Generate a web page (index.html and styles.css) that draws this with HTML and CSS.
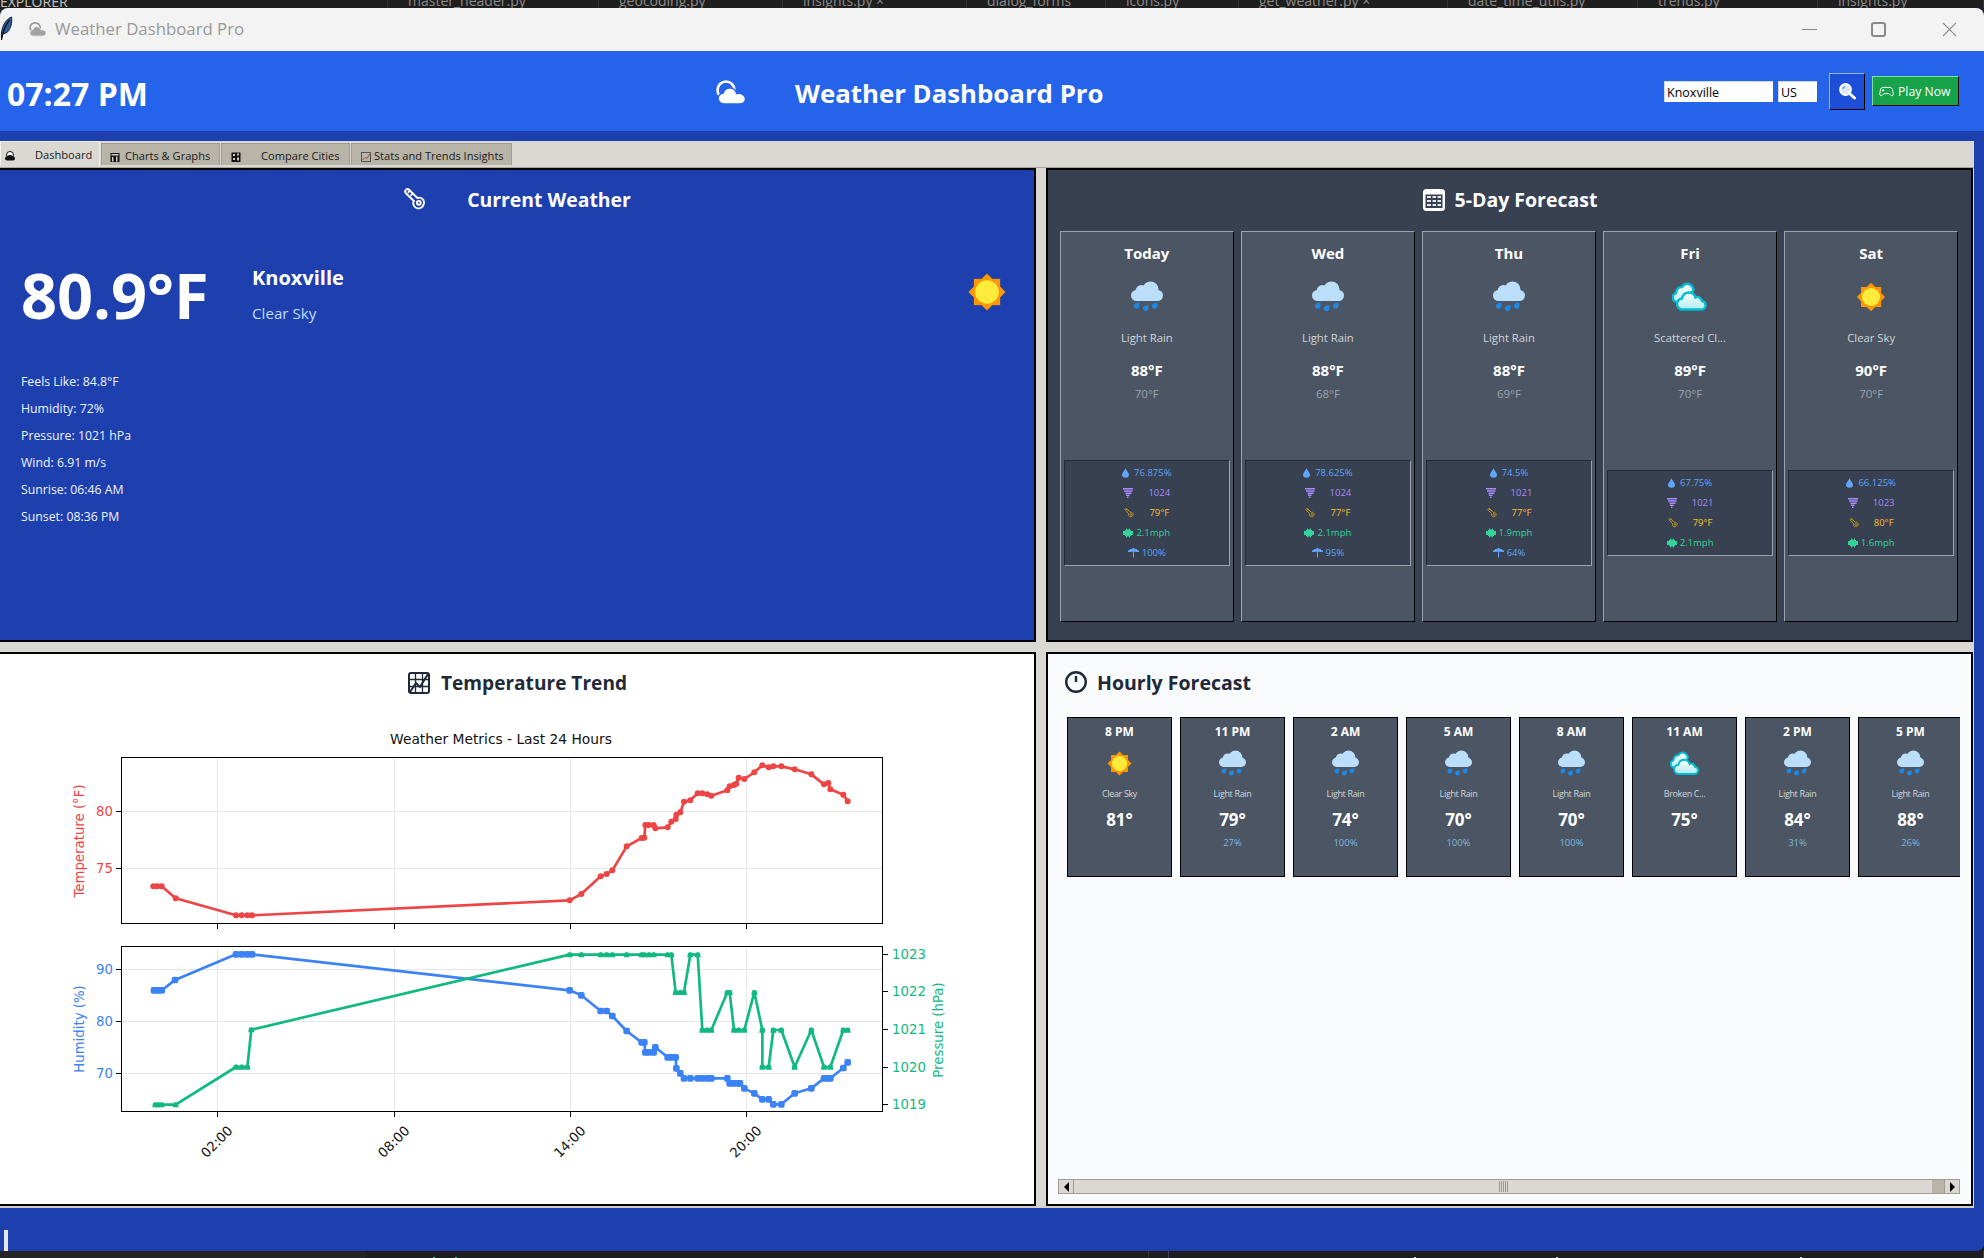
FILE: index.html
```html
<!DOCTYPE html>
<html lang="en">
<head>
<meta charset="utf-8">
<title>Weather Dashboard Pro</title>
<link rel="stylesheet" href="styles.css">
</head>
<body>
<svg class="defs" width="0" height="0" aria-hidden="true">
  <defs>
    <linearGradient id="cloud-grad" x1="0" y1="0" x2="0" y2="1">
      <stop offset="0" stop-color="#ffffff"/>
      <stop offset="1" stop-color="#b2ebf2"/>
    </linearGradient>
    <symbol id="rain" viewBox="0 0 32 32">
      <rect class="cloud-blue" x="0" y="9" width="32" height="11" rx="5.500"/>
      <circle class="cloud-blue" cx="19.500" cy="8.500" r="8"/>
      <circle class="cloud-blue" cx="10.500" cy="10" r="6"/>
      <path class="drop-blue" d="M8.500 21.500V25a2.800 2.800 0 1 1-4.800-2c1-.8 3-1.200 4.800-1.500z"/>
      <path class="drop-blue" d="M17.500 24v3.500a2.800 2.800 0 1 1-4.800-2c1-.8 3-1.200 4.800-1.500z"/>
      <path class="drop-blue" d="M26.500 21.500V25a2.800 2.800 0 1 1-4.800-2c1-.8 3-1.200 4.800-1.500z"/>
    </symbol>
    <symbol id="sun" viewBox="0 0 32 32">
      <rect class="sun-ray" x="6" y="6" width="20" height="20"/>
      <rect class="sun-ray" x="6" y="6" width="20" height="20" transform="rotate(45 16 16)"/>
      <circle class="sun-core" cx="16" cy="16" r="9"/>
    </symbol>
    <symbol id="clouds" viewBox="0 0 36 28">
      <path class="cloud-back" d="M5 19a4.500 4.500 0 0 1-1-8.800C4.500 6 7 3.800 10 4c1.500-2.500 4-3.600 6.500-3 3 .7 4.500 3 5 6l-8 14z"/>
      <path class="cloud-front" d="M11 26.500a5.500 5.500 0 0 1-1-11c.8-3.500 3.500-6 7-6 3 0 5.500 2 6.500 5 1-.6 3-.8 4.500.4 1.200 1 1.800 2 2 3.100 2.300.4 3.700 2 3.700 4.200 0 2.500-2 4.300-4.500 4.300z"/>
    </symbol>
    <symbol id="sky" viewBox="0 0 32 26">
      <circle class="sky-ring" cx="11" cy="11" r="8.500"/>
      <path class="sky-cloud" d="M9 25a5.500 5.500 0 0 1-.8-11c1-3.500 4-5.500 7.500-5 3 .4 5.300 2.500 6 5.500 .8-.3 1.800-.3 2.500-.2 3.500.2 6.300 2.700 6.300 5.500 0 3-2.500 5.200-6 5.200z"/>
    </symbol>
    <symbol id="thermo" viewBox="0 0 24 24">
      <path class="thermo-line" d="M3.200 1.800c1-1 2.200-.9 3.200.1L15 10.400c2.300-.7 5 .2 6.200 2.200 1.400 2.500.6 6-2 7.700-2.500 1.500-5.700 1-7.400-1.300-1.200-1.700-1.400-3.800-.5-5.400L2.800 5.200c-.9-1-.7-2.400.4-3.400z"/>
      <circle class="thermo-line" cx="16.500" cy="15.500" r="2"/>
      <path class="thermo-line" d="M5 5l3-3M8 8l3-3"/>
    </symbol>
    <symbol id="ic-drop" viewBox="0 0 8 11"><path d="M4 0C5 3 8 5 8 7.500A4 3.500 0 0 1 0 7.500C0 5 3 3 4 0z"/></symbol>
    <symbol id="ic-press" viewBox="0 0 10 10"><path d="M0 0h10v1.500H0zM1 2.200h8.500v1.500H1zM2.500 4.400h6v1.500h-6zM3 6.600h3.500v1.400H3zM4 8.500h1.500V10H4z"/></symbol>
    <symbol id="ic-wind" viewBox="0 0 10 10"><path d="M3 .5h1v1h2v-1h1v1.500h1v1h2v4H8v1H7v1.500H6v-1H4v1H3V8H2V7H0V3h2V2h1z"/></symbol>
    <symbol id="ic-rain" viewBox="0 0 11 10"><path d="M0 4V3l1-1h1V1h2l1-1h1l1 1h2v1h1l1 1v1H8l-1-.6-1 .6v5.500H5V4L4 3.400 3 4z"/></symbol>
    <marker id="m-temp" viewBox="-10 -10 20 20" markerWidth="20" markerHeight="20" markerUnits="userSpaceOnUse"><circle class="fill-temp" r="9"/></marker>
    <marker id="m-hum" viewBox="-12 -12 24 24" markerWidth="24" markerHeight="24" markerUnits="userSpaceOnUse"><rect class="fill-hum" x="-10" y="-10" width="20" height="20" rx="6"/></marker>
    <marker id="m-pres" viewBox="-10 -10 20 20" markerWidth="20" markerHeight="20" markerUnits="userSpaceOnUse"><path class="fill-pres" d="M-9 8L-7-5L0-8L7-5L9 8z"/></marker>
  </defs>
</svg>

<div class="editor-top">
  <span class="ed-tab ed-first">EXPLORER</span>
  <span class="ed-tab">master_header.py</span>
  <span class="ed-tab">geocoding.py</span>
  <span class="ed-tab">insights.py ×</span>
  <span class="ed-tab">dialog_forms</span>
  <span class="ed-tab">icons.py</span>
  <span class="ed-tab">get_weather.py ×</span>
  <span class="ed-tab">date_time_utils.py</span>
  <span class="ed-tab">trends.py</span>
  <span class="ed-tab">insights.py</span>
</div>

<div class="window">
  <div class="titlebar">
    <svg class="feather" viewBox="0 0 12 24"><path class="feather-fill" d="M1 22C0 13 4 4 11 1c1 6-1 12-4 15l-5 2.500z"/><path class="feather-line" d="M1 24C2 16 5 9 9 4"/></svg>
    <svg class="title-sky" viewBox="0 0 32 26"><circle class="tb-ring" cx="12" cy="11" r="8.500"/><path class="tb-cloud" d="M9 25a5.500 5.500 0 0 1-.8-11c1-3.500 4-5.500 7.500-5 3 .4 5.300 2.500 6 5.500 .8-.3 1.800-.3 2.500-.2 3.500.2 6.300 2.700 6.300 5.500 0 3-2.500 5.200-6 5.200z"/></svg>
    <span class="title-text">Weather Dashboard Pro</span>
    <div class="win-controls">
      <span class="win-min"></span>
      <span class="win-max"></span>
      <svg class="win-close" viewBox="0 0 16 16"><path class="win-x" d="M1 1l14 14M15 1L1 15"/></svg>
    </div>
  </div>

  <header class="app-header">
    <div class="clock">07:27 PM</div>
    <svg class="head-sky" viewBox="0 0 32 26"><use href="#sky"/></svg>
    <h1 class="app-title">Weather Dashboard Pro</h1>
    <div class="controls">
      <input class="entry entry-city" value="Knoxville" aria-label="City">
      <input class="entry entry-country" value="US" aria-label="Country">
      <button class="btn-search" aria-label="Search">
        <svg class="search-icon" viewBox="0 0 18 18"><circle class="search-glass" cx="7.500" cy="7.500" r="5.500"/><path class="search-handle" d="M11.500 11.500L16.500 16"/><path class="search-shine" d="M5 7a3 3 0 0 1 2-2.500"/></svg>
      </button>
      <button class="btn-play">
        <svg class="pad-icon" viewBox="0 0 20 16"><path class="pad-line" d="M5.500 2.500h9c2 0 3 1.200 3.500 3l1 5.500c.3 2-1.800 3.500-3.300 2L13.500 10.800h-7L4.300 13c-1.500 1.500-3.600 0-3.300-2l1-5.500c.5-1.800 1.500-3 3.500-3zM5.500 5v3M4 6.500h3M13 6h.1M15 8h.1"/></svg>
        Play Now
      </button>
    </div>
  </header>

  <div class="band"></div>

  <div class="notebook">
    <nav class="tabs">
      <div class="tab tab-active tab-dash">
        <svg class="tab-ic ic-dash" viewBox="0 0 10 10"><circle class="ti-ring" cx="5" cy="4" r="3.500"/><path class="ti-black" d="M2 9.500a2 2 0 0 1 0-4C3 3.500 7 3.500 8 5.500a2 2 0 0 1 0 4z"/></svg>
        <span>Dashboard</span>
      </div>
      <div class="tab tab-charts">
        <svg class="tab-ic" viewBox="0 0 10 10"><rect class="ti-black" x=".5" y="1" width="9" height="9"/><rect class="ti-white" x="1.500" y="2" width="7" height="1.500"/><rect class="ti-white" x="2" y="5" width="1.500" height="4.500"/><rect class="ti-white" x="6" y="4.500" width="1.500" height="5"/></svg>
        <span>Charts &amp; Graphs</span>
      </div>
      <div class="tab tab-compare">
        <svg class="tab-ic" viewBox="0 0 10 10"><rect class="ti-black" x=".5" y=".5" width="9" height="9.500"/><rect class="ti-white" x="2" y="2" width="2" height="2"/><rect class="ti-white" x="6" y="1.500" width="2" height="2"/><rect class="ti-white" x="2" y="6" width="2" height="2"/><rect class="ti-white" x="6" y="5.500" width="2" height="3"/></svg>
        <span>Compare Cities</span>
      </div>
      <div class="tab tab-stats">
        <svg class="tab-ic" viewBox="0 0 10 10"><rect class="ti-frame" x=".5" y=".5" width="9" height="9"/><path class="ti-trend" d="M1.500 8L4 5.500 6 6.500 9 1.500"/></svg>
        <span>Stats and Trends Insights</span>
      </div>
    </nav>

    <main class="panels">
      <section class="panel panel-current">
        <div class="panel-title panel-title-current">
          <svg class="title-thermo" viewBox="0 0 24 24"><use href="#thermo"/></svg>
          <h2>Current Weather</h2>
        </div>
        <div class="now">
          <div class="now-temp">80.9°F</div>
          <div class="now-place">
            <div class="now-city">Knoxville</div>
            <div class="now-sky">Clear Sky</div>
          </div>
          <svg class="now-sun"><use href="#sun"/></svg>
        </div>
        <ul class="now-stats">
          <li>Feels Like: 84.8°F</li>
          <li>Humidity: 72%</li>
          <li>Pressure: 1021 hPa</li>
          <li>Wind: 6.91 m/s</li>
          <li>Sunrise: 06:46 AM</li>
          <li>Sunset: 08:36 PM</li>
        </ul>
      </section>

      <section class="panel panel-forecast">
        <div class="panel-title panel-title-forecast">
          <svg class="title-cal" viewBox="0 0 24 24"><rect class="cal-frame" x="1" y="1" width="22" height="22" rx="3.500"/><rect class="cal-head" x="3.500" y="6.500" width="17" height="13.500"/><path class="cal-grid" d="M5 9h4M10.500 9h3.500M15.500 9h3.500M5 13h4M10.500 13h3.500M15.500 13h3.500M5 17h4M10.500 17h3.500M15.500 17h3.500"/></svg>
          <h2>5-Day Forecast</h2>
        </div>
        <div class="days">
          <article class="day">
            <div class="day-name">Today</div>
            <svg class="day-icon"><use href="#rain"/></svg>
            <div class="day-desc">Light Rain</div>
            <div class="day-high">88°F</div>
            <div class="day-low">70°F</div>
            <div class="day-slot"><div class="metrics">
              <div class="metric m-drop"><svg class="mi mi-drop"><use href="#ic-drop"/></svg>76.875%</div>
              <div class="metric m-press"><svg class="mi mi-press"><use href="#ic-press"/></svg>1024</div>
              <div class="metric m-feel"><svg class="mi mi-feel"><use href="#thermo"/></svg>79°F</div>
              <div class="metric m-wind"><svg class="mi mi-wind"><use href="#ic-wind"/></svg>2.1mph</div>
              <div class="metric m-rain"><svg class="mi mi-rain"><use href="#ic-rain"/></svg>100%</div>
            </div></div>
          </article>
          <article class="day">
            <div class="day-name">Wed</div>
            <svg class="day-icon"><use href="#rain"/></svg>
            <div class="day-desc">Light Rain</div>
            <div class="day-high">88°F</div>
            <div class="day-low">68°F</div>
            <div class="day-slot"><div class="metrics">
              <div class="metric m-drop"><svg class="mi mi-drop"><use href="#ic-drop"/></svg>78.625%</div>
              <div class="metric m-press"><svg class="mi mi-press"><use href="#ic-press"/></svg>1024</div>
              <div class="metric m-feel"><svg class="mi mi-feel"><use href="#thermo"/></svg>77°F</div>
              <div class="metric m-wind"><svg class="mi mi-wind"><use href="#ic-wind"/></svg>2.1mph</div>
              <div class="metric m-rain"><svg class="mi mi-rain"><use href="#ic-rain"/></svg>95%</div>
            </div></div>
          </article>
          <article class="day">
            <div class="day-name">Thu</div>
            <svg class="day-icon"><use href="#rain"/></svg>
            <div class="day-desc">Light Rain</div>
            <div class="day-high">88°F</div>
            <div class="day-low">69°F</div>
            <div class="day-slot"><div class="metrics">
              <div class="metric m-drop"><svg class="mi mi-drop"><use href="#ic-drop"/></svg>74.5%</div>
              <div class="metric m-press"><svg class="mi mi-press"><use href="#ic-press"/></svg>1021</div>
              <div class="metric m-feel"><svg class="mi mi-feel"><use href="#thermo"/></svg>77°F</div>
              <div class="metric m-wind"><svg class="mi mi-wind"><use href="#ic-wind"/></svg>1.9mph</div>
              <div class="metric m-rain"><svg class="mi mi-rain"><use href="#ic-rain"/></svg>64%</div>
            </div></div>
          </article>
          <article class="day">
            <div class="day-name">Fri</div>
            <svg class="day-icon day-clouds"><use href="#clouds"/></svg>
            <div class="day-desc">Scattered Cl...</div>
            <div class="day-high">89°F</div>
            <div class="day-low">70°F</div>
            <div class="day-slot"><div class="metrics">
              <div class="metric m-drop"><svg class="mi mi-drop"><use href="#ic-drop"/></svg>67.75%</div>
              <div class="metric m-press"><svg class="mi mi-press"><use href="#ic-press"/></svg>1021</div>
              <div class="metric m-feel"><svg class="mi mi-feel"><use href="#thermo"/></svg>79°F</div>
              <div class="metric m-wind"><svg class="mi mi-wind"><use href="#ic-wind"/></svg>2.1mph</div>
            </div></div>
          </article>
          <article class="day">
            <div class="day-name">Sat</div>
            <svg class="day-icon"><use href="#sun"/></svg>
            <div class="day-desc">Clear Sky</div>
            <div class="day-high">90°F</div>
            <div class="day-low">70°F</div>
            <div class="day-slot"><div class="metrics">
              <div class="metric m-drop"><svg class="mi mi-drop"><use href="#ic-drop"/></svg>66.125%</div>
              <div class="metric m-press"><svg class="mi mi-press"><use href="#ic-press"/></svg>1023</div>
              <div class="metric m-feel"><svg class="mi mi-feel"><use href="#thermo"/></svg>80°F</div>
              <div class="metric m-wind"><svg class="mi mi-wind"><use href="#ic-wind"/></svg>1.6mph</div>
            </div></div>
          </article>
        </div>
      </section>

      <section class="panel panel-trend">
        <div class="panel-title panel-title-trend">
          <svg class="title-chart" viewBox="0 0 24 24"><rect class="chart-frame" x="2" y="2" width="20" height="20" rx="2"/><path class="chart-grid" d="M8.500 2v20M15.500 2v20M2 8.500h20M2 15.500h20"/><path class="chart-trend" d="M3 21L9 12l4 4 8-13"/></svg>
          <h2>Temperature Trend</h2>
        </div>
        <svg class="chart" viewBox="0 716 1034 490">
          <text class="c-title" x="501" y="744">Weather Metrics - Last 24 Hours</text>

          <path class="c-grid" d="M217.500 758v165M394.500 758v165M570.500 758v165M746.500 758v165M122 811.500h760M122 868.500h760"/>
          <path class="c-grid" d="M217.500 947v164M394.500 947v164M570.500 947v164M746.500 947v164M122 969.500h760M122 1021.500h760M122 1073.500h760"/>

          <g transform="translate(500 720) scale(.33333)">
            <polyline class="l-temp" points="-1040,499 -1028,499 -1015,499 -973,535 -792,586 -775,586 -758,586 -744,586 209,541 244,522 302,469 320,462 337,451 380,379 425,354 433,353 436,315 447,315 461,315 466,325 503,322 514,305 527,297 529,284 541,277 552,245 571,241 593,220 607,220 622,223 634,227 682,211 689,199 702,195 709,191 716,173 733,177 763,157 787,136 806,142 820,139 844,139 884,148 934,163 972,193 985,189 991,208 1030,224 1043,244"/>
            <polyline class="l-hum" points="-1038,811 -1026,811 -1015,811 -975,780 -792,703 -775,703 -758,703 -744,703 209,811 244,826 302,873 320,873 337,888 380,933 425,967 433,967 436,997 447,997 461,997 466,982 503,1012 514,1012 527,1012 529,1045 541,1060 552,1075 571,1075 593,1075 607,1075 622,1075 634,1075 682,1075 689,1090 702,1090 716,1090 720,1090 733,1105 763,1120 787,1138 806,1138 820,1153 844,1153 884,1120 934,1105 972,1075 985,1075 991,1075 1030,1044 1043,1027"/>
            <polyline class="l-pres" points="-1034,1154 -1025,1154 -1015,1154 -973,1154 -792,1041 -775,1041 -758,1041 -746,929 209,704 244,704 302,704 320,704 337,704 380,704 425,704 433,704 447,704 461,704 503,704 514,704 527,817 541,817 552,817 571,704 593,704 607,930 622,930 634,930 682,817 689,817 702,930 716,930 733,930 763,817 787,930 787,1041 806,1041 820,930 844,930 884,1041 934,930 972,1041 991,1041 1030,930 1043,930"/>
          </g>

          <rect class="c-axes" x="121.500" y="757.500" width="761" height="166"/>
          <rect class="c-axes" x="121.500" y="946.500" width="761" height="165"/>
          <path class="c-tick" d="M217.500 924v5M394.500 924v5M570.500 924v5M746.500 924v5M217.500 1112v5M394.500 1112v5M570.500 1112v5M746.500 1112v5M121 811.500h-5M121 868.500h-5M121 969.500h-5M121 1021.500h-5M121 1073.500h-5M883 954.500h5M883 991.500h5M883 1029.500h5M883 1067.500h5M883 1104.500h5"/>

          <text class="c-num c-red c-end" x="113" y="816">80</text>
          <text class="c-num c-red c-end" x="113" y="873">75</text>
          <text class="c-num c-blue c-end" x="113" y="974">90</text>
          <text class="c-num c-blue c-end" x="113" y="1026">80</text>
          <text class="c-num c-blue c-end" x="113" y="1078">70</text>
          <text class="c-num c-green" x="892" y="959">1023</text>
          <text class="c-num c-green" x="892" y="996">1022</text>
          <text class="c-num c-green" x="892" y="1034">1021</text>
          <text class="c-num c-green" x="892" y="1072">1020</text>
          <text class="c-num c-green" x="892" y="1109">1019</text>

          <text class="c-num c-red c-mid" transform="translate(84 841) rotate(-90)">Temperature (°F)</text>
          <text class="c-num c-blue c-mid" transform="translate(84 1029) rotate(-90)">Humidity (%)</text>
          <text class="c-num c-green c-mid" transform="translate(943 1030) rotate(-90)">Pressure (hPa)</text>

          <text class="c-num c-dark c-mid" transform="translate(220 1145) rotate(-45)">02:00</text>
          <text class="c-num c-dark c-mid" transform="translate(397 1145) rotate(-45)">08:00</text>
          <text class="c-num c-dark c-mid" transform="translate(573 1145) rotate(-45)">14:00</text>
          <text class="c-num c-dark c-mid" transform="translate(749 1145) rotate(-45)">20:00</text>
        </svg>
      </section>

      <section class="panel panel-hourly">
        <div class="panel-title panel-title-hourly">
          <svg class="title-clock" viewBox="0 0 22 22"><circle class="clock-ring" cx="11" cy="11" r="9.800"/><path class="clock-hand" d="M11 5v6"/></svg>
          <h2>Hourly Forecast</h2>
        </div>
        <div class="hours">
          <article class="hour"><div class="hour-time">8 PM</div><svg class="hour-icon"><use href="#sun"/></svg><div class="hour-desc">Clear Sky</div><div class="hour-temp">81°</div></article>
          <article class="hour"><div class="hour-time">11 PM</div><svg class="hour-icon"><use href="#rain"/></svg><div class="hour-desc">Light Rain</div><div class="hour-temp">79°</div><div class="hour-pop">27%</div></article>
          <article class="hour"><div class="hour-time">2 AM</div><svg class="hour-icon"><use href="#rain"/></svg><div class="hour-desc">Light Rain</div><div class="hour-temp">74°</div><div class="hour-pop">100%</div></article>
          <article class="hour"><div class="hour-time">5 AM</div><svg class="hour-icon"><use href="#rain"/></svg><div class="hour-desc">Light Rain</div><div class="hour-temp">70°</div><div class="hour-pop">100%</div></article>
          <article class="hour"><div class="hour-time">8 AM</div><svg class="hour-icon"><use href="#rain"/></svg><div class="hour-desc">Light Rain</div><div class="hour-temp">70°</div><div class="hour-pop">100%</div></article>
          <article class="hour"><div class="hour-time">11 AM</div><svg class="hour-icon hour-clouds"><use href="#clouds"/></svg><div class="hour-desc">Broken C...</div><div class="hour-temp">75°</div></article>
          <article class="hour"><div class="hour-time">2 PM</div><svg class="hour-icon"><use href="#rain"/></svg><div class="hour-desc">Light Rain</div><div class="hour-temp">84°</div><div class="hour-pop">31%</div></article>
          <article class="hour"><div class="hour-time">5 PM</div><svg class="hour-icon"><use href="#rain"/></svg><div class="hour-desc">Light Rain</div><div class="hour-temp">88°</div><div class="hour-pop">26%</div></article>
        </div>
        <div class="hscroll">
          <div class="sb-arrow"><span class="arrow-left"></span></div>
          <div class="sb-thumb"><span class="sb-grip"></span></div>
          <div class="sb-rest"></div>
          <div class="sb-arrow"><span class="arrow-right"></span></div>
        </div>
      </section>
    </main>
  </div>

  <footer class="app-footer"><span class="caret"></span></footer>
</div>

<div class="editor-bottom">
  <span class="eb eb-a"></span>
  <span class="eb eb-b"></span>
  <span class="eb eb-c"></span>
  <span class="eb eb-d"></span>
</div>
</body>
</html>
```
FILE: styles.css
```css
* { box-sizing: border-box; }
html, body { margin: 0; padding: 0; }
body {
  width: 1984px;
  height: 1258px;
  overflow: hidden;
  background: #1f1f1f;
  font-family: "Open Sans", "Liberation Sans", sans-serif;
  color: #111;
}
.defs { display: block; height: 0; }

/* Editor behind the window */
.editor-top {
  display: grid;
  grid-template-columns: 388px 211px 184px 184px 139px 133px 209px 190px 180px 1fr;
  height: 8px;
  overflow: hidden;
  background: #1f1f1f;
}
.ed-tab {
  height: 8px;
  padding-left: 20px;
  border-right: 1px solid #333;
  color: #8c8c8c;
  font-size: 14px;
  line-height: 2px;
  white-space: nowrap;
  overflow: hidden;
}
.ed-first { padding-left: 0; color: #c4c4c4; line-height: 3px; }
.editor-bottom { display: flex; height: 7px; background: #1f1f1f; }
.eb { height: 7px; border-right: 1px solid #44405a; }
.eb-a { width: 365px; background: #252526; border-right: 0; }
.eb-b {
  width: 784px;
  border-right-color: #333;
  background: linear-gradient(#34d399, #34d399) 68px 6px / 2px 1px no-repeat,
              linear-gradient(#34d399, #34d399) 90px 6px / 2px 1px no-repeat;
}
.eb-c { width: 20px; }
.eb-d {
  flex: 1;
  background: linear-gradient(#cfcfcf, #cfcfcf) 245px 6px / 2px 1px no-repeat,
              linear-gradient(#cfcfcf, #cfcfcf) 387px 6px / 2px 1px no-repeat,
              linear-gradient(#cfcfcf, #cfcfcf) 631px 6px / 2px 1px no-repeat;
}

/* Window */
.window {
  width: 1984px;
  height: 1243px;
  display: flex;
  flex-direction: column;
  overflow: hidden;
  background: #1e40af;
  border-radius: 8px 8px 8px 0;
}
.titlebar {
  height: 43px;
  flex: none;
  display: flex;
  align-items: center;
  background: #f3f3f3;
}
.feather { width: 13px; height: 24px; flex: none; margin-top: -3px; }
.feather-fill { fill: #2f5f96; stroke: #14233a; stroke-width: 1; }
.feather-line { fill: none; stroke: #000; stroke-width: 1.200; }
.title-sky { width: 19px; height: 16px; flex: none; margin-left: 15px; margin-top: -2px; }
.tb-ring { fill: none; stroke: #9a9a9a; stroke-width: 3; }
.tb-cloud { fill: #a2a2a2; stroke: #f3f3f3; stroke-width: 1.500; }
.title-text { margin: -2px 0 0 8px; font-size: 16.800px; color: #999; white-space: nowrap; }
.win-controls { margin-left: auto; display: flex; align-items: center; padding-right: 27px; }
.win-min { width: 15px; height: 1px; background: #8a8a8a; }
.win-max { width: 15px; height: 15px; margin-left: 54px; border: 2px solid #8a8a8a; border-radius: 3px; }
.win-close { width: 15px; height: 15px; margin-left: 56px; }
.win-x { fill: none; stroke: #8a8a8a; stroke-width: 1.300; }

/* Header */
.app-header {
  height: 80px;
  flex: none;
  display: flex;
  align-items: center;
  padding: 0 25px 0 7px;
  background: #2563eb;
  color: #fff;
}
.clock { width: 140px; flex: none; margin-top: 4px; font-size: 32px; font-weight: 700; white-space: nowrap; }
.head-sky { width: 32px; height: 26px; flex: none; margin-left: 568px; margin-top: 2px; }
.sky-ring { fill: none; stroke: #fff; stroke-width: 2.600; }
.sky-cloud { fill: #fff; stroke: #2563eb; stroke-width: 1.500; }
.app-title { margin: 4px 0 0 48px; font-size: 25.800px; font-weight: 700; white-space: nowrap; }
.controls { margin-left: auto; display: flex; align-items: center; }
.entry {
  height: 21px;
  margin-top: 1px;
  padding: 0 2px;
  border: 0;
  border-top: 1px solid #cfd8e8;
  border-left: 1px solid #cfd8e8;
  background: #fff;
  color: #000;
  font-family: "Open Sans", "Liberation Sans", sans-serif;
  font-size: 12.500px;
  outline: 0;
}
.entry-city { width: 109px; }
.entry-country { width: 39px; margin-left: 5px; }
.btn-search {
  width: 36px;
  height: 37px;
  margin-left: 12px;
  padding: 0;
  display: flex;
  align-items: center;
  justify-content: center;
  background: #1d4ed8;
  border: 1px solid;
  border-color: #93b4f5 #000 #000 #93b4f5;
}
.search-icon { width: 18px; height: 18px; }
.search-glass { fill: #dbe8ff; stroke: #fff; stroke-width: 1.800; }
.search-handle { fill: none; stroke: #fff; stroke-width: 3; stroke-linecap: round; }
.search-shine { fill: none; stroke: #4f7be8; stroke-width: 1.200; }
.btn-play {
  width: 87px;
  height: 30px;
  margin-left: 7px;
  padding: 0 0 0 6px;
  display: flex;
  align-items: center;
  gap: 4px;
  background: #16a34a;
  border: 1px solid;
  border-color: #7be0a4 #000 #000 #7be0a4;
  color: #fff;
  font-family: "Open Sans", "Liberation Sans", sans-serif;
  font-size: 12.200px;
  white-space: nowrap;
}
.pad-icon { width: 15px; height: 13px; flex: none; }
.pad-line { fill: none; stroke: #fff; stroke-width: 1.300; }
.band { height: 10px; flex: none; background: #1e40af; }

/* Notebook */
.notebook {
  width: 1974px;
  height: 1067px;
  flex: none;
  display: flex;
  flex-direction: column;
  background: #d9d8d2;
  border-bottom: 2px solid #cfcec8;
}
.tabs {
  height: 27px;
  flex: none;
  display: flex;
  align-items: flex-end;
  gap: 1px;
  padding-bottom: 2px;
  border-bottom: 1px solid #a8a59c;
}
.tab {
  height: 22px;
  display: flex;
  align-items: center;
  padding-top: 1px;
  background: #b8b4a8;
  border: 1px solid #a09c90;
  border-bottom: 0;
  color: #1a1a1a;
  font-size: 11.100px;
  white-space: nowrap;
}
.tab-active { height: 24px; background: #d9d8d2; border-color: #f2f1ec; }
.tab-dash { width: 100px; padding-left: 4px; gap: 20px; }
.tab-charts { width: 119px; padding-left: 8px; gap: 5px; }
.tab-compare { width: 129px; padding-left: 9px; gap: 20px; }
.tab-stats { width: 161px; padding-left: 9px; gap: 3px; }
.tab-ic { width: 10px; height: 10px; flex: none; margin-top: 3px; }
.ti-black { fill: #111; }
.ti-white { fill: #cfcdc5; }
.ti-ring { fill: #fff; stroke: #111; stroke-width: 1; }
.ti-frame { fill: none; stroke: #555; stroke-width: 1; }
.ti-trend { fill: none; stroke: #a5533c; stroke-width: 1; }

.panels {
  flex: 1;
  min-height: 0;
  display: grid;
  grid-template-columns: 1036px 927px;
  grid-template-rows: 474px 554px;
  column-gap: 10px;
  row-gap: 10px;
  align-content: start;
}
.panel {
  position: relative;
  min-width: 0;
  display: flex;
  flex-direction: column;
  border: 2px solid #000;
  overflow: hidden;
}
.panel-current, .panel-trend { border-left: 0; }
.panel-current { background: #1e40af; color: #fff; }
.panel-forecast { background: #374151; color: #fff; }
.panel-trend { background: #fff; color: #1f2937; }
.panel-hourly { background: #f9fafb; color: #1f2937; }
.panel-title {
  flex: none;
  display: flex;
  align-items: center;
  justify-content: center;
  height: 61px;
  padding-bottom: 2px;
}
.panel-title h2 { margin: 0; font-size: 19.500px; font-weight: 700; white-space: nowrap; }
.panel-title-current { gap: 41px; }
.panel-title-current h2 { font-size: 19.400px; }
.panel-title-forecast { gap: 9px; }
.panel-title-trend { gap: 10px; height: 62px; padding-bottom: 4px; }
.panel-title-trend h2 { font-size: 19.100px; }
.panel-title-hourly { justify-content: flex-start; gap: 10px; padding-left: 17px; height: 63px; padding-bottom: 7px; }
.title-thermo { width: 23px; height: 23px; color: #fff; }
.thermo-line { fill: none; stroke: currentColor; stroke-width: 2; }
.title-cal { width: 24px; height: 24px; }
.cal-frame { fill: #fff; }
.cal-head { fill: #374151; }
.cal-grid { stroke: #e5e7eb; stroke-width: 2; fill: none; }
.title-chart { width: 24px; height: 24px; }
.chart-frame { fill: #fff; stroke: #1f2937; stroke-width: 2; }
.chart-grid { fill: none; stroke: #1f2937; stroke-width: 1.300; }
.chart-trend { fill: none; stroke: #1f2937; stroke-width: 2; }
.title-clock { width: 22px; height: 22px; }
.clock-ring { fill: none; stroke: #1f2937; stroke-width: 2.400; }
.clock-hand { fill: none; stroke: #1f2937; stroke-width: 2.400; }

/* Current */
.now { display: flex; align-items: flex-start; padding: 22px 26px 0 21px; height: 124px; }
.now-temp { width: 231px; flex: none; font-size: 63px; font-weight: 700; line-height: 84px; white-space: nowrap; }
.now-place { padding-top: 11px; }
.now-city { font-size: 20px; font-weight: 700; line-height: 28px; }
.now-sky { margin-top: 10px; font-size: 15.200px; line-height: 22px; color: #bfdbfe; }
.now-sun { width: 42px; height: 42px; margin-left: auto; margin-top: 18px; }
.now-stats { list-style: none; margin: 0; padding: 13px 0 0 21px; font-size: 12.300px; color: #eff4ff; }
.now-stats li { height: 27px; line-height: 27px; white-space: nowrap; }

/* Icons */
.cloud-blue { fill: #bbdefb; }
.drop-blue { fill: #1e88e5; }
.sun-ray { fill: #ff9800; }
.sun-core { fill: #ffeb3b; }
.cloud-back { fill: url(#cloud-grad); stroke: #00bcd4; stroke-width: 2.400; }
.cloud-front { fill: url(#cloud-grad); stroke: #00bcd4; stroke-width: 2.400; }

/* Five days */
.days {
  flex: 1;
  display: grid;
  grid-template-columns: repeat(5, 173.600px);
  column-gap: 7.500px;
  padding: 0 0 18px 12px;
}
.day {
  display: flex;
  flex-direction: column;
  align-items: center;
  background: #4b5563;
  border: 1px solid;
  border-color: #9ca3af #000 #000 #9ca3af;
  padding-top: 10px;
}
.day-name { height: 22px; line-height: 22px; font-size: 15px; font-weight: 700; }
.day-icon { width: 32px; height: 32px; margin-top: 17px; flex: none; }
.day-clouds { width: 36px; }
.day-desc { height: 16px; line-height: 16px; margin-top: 17px; font-size: 11.300px; color: #d1d5db; }
.day-high { height: 22px; line-height: 22px; margin-top: 13px; font-size: 15px; font-weight: 700; }
.day-low { height: 16px; line-height: 16px; margin-top: 5px; font-size: 11.500px; color: #9ca3af; }
.day-slot { flex: 1; width: 100%; display: flex; align-items: center; padding: 2px 3px 0; }
.metrics {
  width: 100%;
  padding: 2px 0;
  background: #374151;
  border: 1px solid;
  border-color: #1f2937 #9ca3af #9ca3af #1f2937;
}
.metric {
  height: 20px;
  display: flex;
  align-items: center;
  justify-content: center;
  font-size: 9.500px;
  white-space: nowrap;
}
.mi { flex: none; }
.mi-drop { width: 7px; height: 10px; margin-right: 5px; fill: #60a5fa; }
.mi-press { width: 10px; height: 10px; margin-right: 15px; fill: #a78bfa; }
.mi-feel { width: 10px; height: 10px; margin-right: 15px; color: #d4a017; }
.mi-wind { width: 10px; height: 10px; margin-right: 3px; fill: #34d399; }
.mi-rain { width: 11px; height: 10px; margin-right: 3px; fill: #60a5fa; }
.m-drop, .m-rain { color: #60a5fa; }
.m-press { color: #a78bfa; }
.m-feel { color: #fbbf24; }
.m-wind { color: #34d399; }

/* Hourly */
.hours {
  height: 160px;
  width: 893px;
  flex: none;
  margin-left: 19px;
  display: flex;
  gap: 8px;
  overflow: hidden;
}
.hour {
  width: 105px;
  height: 160px;
  flex: none;
  display: flex;
  flex-direction: column;
  align-items: center;
  padding-top: 5px;
  background: #4b5563;
  border: 1px solid #000;
  color: #fff;
}
.hour-time { height: 18px; line-height: 18px; font-size: 12px; font-weight: 700; white-space: nowrap; }
.hour-icon { width: 27px; height: 27px; margin-top: 9px; flex: none; }
.hour-clouds { width: 30px; }
.hour-desc { height: 14px; line-height: 14px; margin-top: 10px; font-size: 9px; letter-spacing: -.35px; color: #d1d5db; white-space: nowrap; }
.hour-temp { height: 24px; line-height: 24px; margin-top: 7px; font-size: 17px; font-weight: 700; }
.hour-pop { height: 14px; line-height: 14px; margin-top: 4px; font-size: 9.500px; color: #7fb8dc; }

.hscroll {
  width: 902px;
  height: 15px;
  margin: auto 0 10px 10px;
  flex: none;
  display: flex;
  background: #b8b4a8;
  border: 1px solid #a09c94;
}
.sb-arrow {
  width: 15px;
  flex: none;
  display: flex;
  align-items: center;
  justify-content: center;
  background: #d9d8d2;
  border-right: 1px solid #a09c94;
}
.sb-arrow:last-child { border-right: 0; border-left: 1px solid #a09c94; }
.arrow-left { border-style: solid; border-width: 5px 5px 5px 0; border-color: transparent #000 transparent transparent; }
.arrow-right { border-style: solid; border-width: 5px 0 5px 5px; border-color: transparent transparent transparent #000; }
.sb-thumb { flex: 1; display: flex; justify-content: center; align-items: stretch; background: #d9d8d2; }
.sb-grip {
  width: 9px;
  margin: 1px 0;
  background: repeating-linear-gradient(90deg, #9a978e 0 1px, #d9d8d2 1px 2px);
}
.sb-rest { width: 12px; flex: none; }

/* Footer */
.app-footer { flex: 1; display: flex; align-items: flex-end; padding-left: 4px; background: #1e40af; }
.caret { width: 4px; height: 21px; background: #e6e6e6; }

/* Chart */
.chart { display: block; width: 1034px; height: 490px; flex: none; }
.chart text { font-family: "DejaVu Sans", sans-serif; font-size: 13.300px; }
.chart .c-title { font-size: 13.800px; fill: #111; text-anchor: middle; }
.c-end { text-anchor: end; }
.c-mid { text-anchor: middle; }
.c-grid { fill: none; stroke: #e6e6e6; stroke-width: 1; }
.c-axes { fill: none; stroke: #000; stroke-width: 1; }
.c-tick { fill: none; stroke: #000; stroke-width: 1; }
.c-red { fill: #ef4444; }
.c-blue { fill: #3b82f6; }
.c-green { fill: #10b981; }
.c-dark { fill: #111; }
.fill-temp { fill: #ef4444; }
.fill-hum { fill: #3b82f6; }
.fill-pres { fill: #10b981; }
.l-temp, .l-hum, .l-pres { fill: none; stroke-width: 8; stroke-linejoin: round; }
.l-temp { stroke: #ef4444; marker: url(#m-temp); }
.l-hum { stroke: #3b82f6; marker: url(#m-hum); }
.l-pres { stroke: #10b981; marker: url(#m-pres); }
```
